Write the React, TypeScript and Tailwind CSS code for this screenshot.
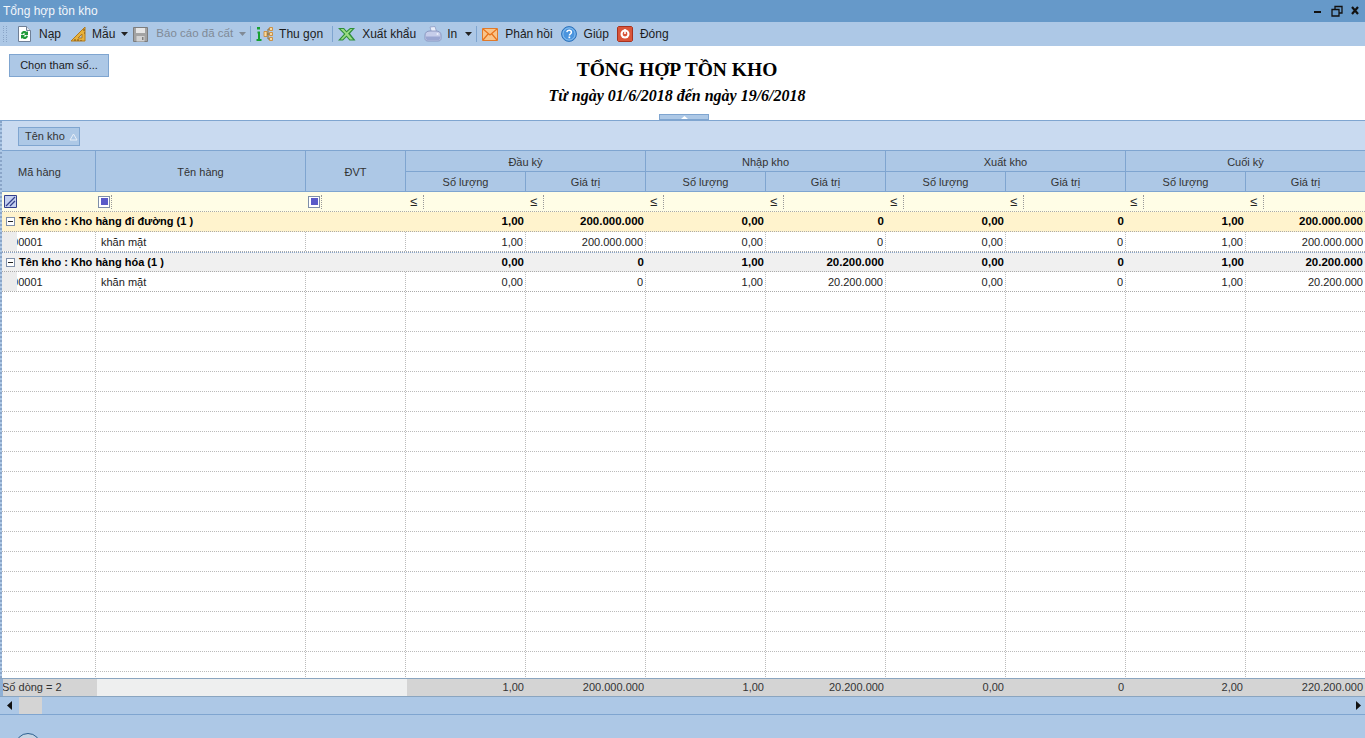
import type { ReactNode } from 'react';

const gridCols = 'grid grid-cols-[94px_210px_100px_repeat(8,120px)]';

function Caret({ color = '#222' }: { color?: string }) {
  return (
    <svg width="7" height="4" viewBox="0 0 7 4" className="shrink-0">
      <path d="M0 0h7L3.5 4z" fill={color} />
    </svg>
  );
}

function IconReload() {
  return (
    <svg width="15" height="16" viewBox="0 0 15 16">
      <path d="M1.5.5h8l4 4v11h-12z" fill="#fff" stroke="#6f7f96" />
      <path d="M9.5.5v4h4" fill="#dfe6ef" stroke="#6f7f96" />
      <path d="M4 8a3.5 3.5 0 0 1 6-2l1-1v4H7l1.300-1.300A1.800 1.800 0 0 0 5.600 8.500z" fill="#1f9a3a" />
      <path d="M11 10a3.500 3.500 0 0 1-6 2l-1 1V9h4l-1.300 1.300a1.800 1.800 0 0 0 2.700-.8z" fill="#1f9a3a" />
    </svg>
  );
}

function IconRuler() {
  return (
    <svg width="16" height="16" viewBox="0 0 16 16">
      <path d="M15 1v14H1z" fill="#e8b23c" stroke="#b27a1c" />
      <path d="M12 8v4H8z" fill="#adc8e6" stroke="#b27a1c" />
      <path d="M5 15v-2M8 15v-2M11 15v-1M15 4h-2M15 7h-1" stroke="#7a4f10" />
    </svg>
  );
}

function IconSave() {
  return (
    <svg width="15" height="15" viewBox="0 0 15 15">
      <path d="M.5.500h14v14H.500z" fill="#a3a3a3" stroke="#7d7d7d" />
      <path d="M3 1h9v5H3z" fill="#e6e6e6" />
      <path d="M3.500 9h8v5.500h-8z" fill="#d2d2d2" />
      <path d="M9 10h1.500v3H9z" fill="#808080" />
    </svg>
  );
}

function IconTree() {
  return (
    <svg width="17" height="16" viewBox="0 0 17 16">
      <path d="M1 1h3v2.500H1zM1.500 5.500h2.500V13h1.500v2H.500v-2h1.500V7.500h-.5z" fill="#18a032" />
      <path d="M8 5.500h3v5H8zM13.500 1.500h3v3h-3zM13.500 6.500h3v3h-3zM13.500 11.500h3v3h-3z" fill="#f7d9a0" stroke="#c9822a" strokeWidth=".8" />
      <path d="M11 8h2.500M12 3v10h1.500M12 3h1.500" fill="none" stroke="#8a6a30" />
    </svg>
  );
}

function IconExcel() {
  return (
    <svg width="18" height="14" viewBox="0 0 18 14">
      <path d="M0 1h6l2.500 3L12 1h5l-5 5.500 5.500 7h-6L8.500 10 5 13.500H0L6 7z" fill="#2f8f3a" />
      <path d="M2.500 2h3l3 3.500L12.500 2h2L10 6.500l5 6h-3L8.500 8.500 4.500 12.500h-2L7.500 7z" fill="#9bdc84" />
    </svg>
  );
}

function IconPrinter() {
  return (
    <svg width="18" height="16" viewBox="0 0 18 16">
      <path d="M6 1l5-.5 1.500 5-5 1z" fill="#e9eefa" stroke="#8f9cc4" strokeWidth=".8" />
      <path d="M1 9c0-2.500 2-4 5-4h6c3 0 5 1.500 5 4v3.500c0 1.500-1 2.500-3 2.500H4c-2 0-3-1-3-2.500z" fill="#c6cdea" stroke="#7f8cb8" strokeWidth=".8" />
      <path d="M2 10.500h14v2c0 1-1 1.800-2.500 1.800h-9C3 14.300 2 13.500 2 12.500z" fill="#9aa6d2" />
      <circle cx="13.500" cy="8" r="1" fill="#eef1fb" />
    </svg>
  );
}

function IconMail() {
  return (
    <svg width="16" height="13" viewBox="0 0 16 13">
      <path d="M.500.500h15v12H.500z" fill="#f9c489" stroke="#e07a2a" />
      <path d="M1 1l7 6 7-6M1 12l5.500-6.500M15 12L9.500 5.500" fill="none" stroke="#e8731c" strokeWidth="1.200" />
    </svg>
  );
}

function IconHelp() {
  return (
    <svg width="16" height="16" viewBox="0 0 16 16">
      <circle cx="8" cy="8" r="7.400" fill="#5aa3e6" stroke="#2b6fb8" />
      <circle cx="8" cy="8" r="6" fill="#4a94de" stroke="#a9d2f5" strokeWidth=".6" />
      <path d="M5.800 6.200C6 4.800 7 4.300 8.100 4.300c1.300 0 2.300.8 2.300 2 0 1.700-2 1.700-2 3.200" fill="none" stroke="#fff" strokeWidth="1.500" />
      <path d="M7.500 10.500h1.700v1.700H7.500z" fill="#fff" />
    </svg>
  );
}

function IconClose() {
  return (
    <svg width="16" height="16" viewBox="0 0 16 16">
      <path d="M1.500.500h13l1 1v13l-1 1h-13l-1-1v-13z" fill="#d9553a" stroke="#a8321f" />
      <circle cx="8" cy="8" r="4.500" fill="#fff" />
      <circle cx="8" cy="8" r="2.400" fill="#d9553a" />
      <path d="M7.200 3h1.600v5H7.200z" fill="#fff" />
    </svg>
  );
}

function Gripper() {
  return (
    <div className="ml-[3px] grid h-[16px] w-[6px] grid-cols-2 content-between">
      {Array.from({ length: 16 }).map((_, i) => (
        <span key={i} className="h-px w-px bg-[#8aa5c8]" />
      ))}
    </div>
  );
}

function Sep({ className }: { className: string }) {
  return <span className={`h-[16px] w-px bg-[#7fa5d0] ${className}`} />;
}

function ToolItem({ icon, label, className, gap, disabled }: { icon: ReactNode; label: string; className: string; gap: string; disabled?: boolean }) {
  return (
    <div className={`flex items-center ${className}`}>
      {icon}
      <span className={`${gap} ${disabled ? 'text-[11.5px] text-[#808a96]' : 'text-[#1c1c1c]'}`}>{label}</span>
    </div>
  );
}

function Toolbar() {
  return (
    <div className="flex h-[24px] shrink-0 items-center bg-[#adc8e6]">
      <Gripper />
      <ToolItem className="ml-[8px]" gap="ml-[7px]" icon={<IconReload />} label="Nạp" />
      <ToolItem className="ml-[9px]" gap="ml-[6px]" icon={<IconRuler />} label="Mẫu" />
      <span className="ml-[6px]"><Caret /></span>
      <ToolItem className="ml-[5px]" gap="ml-[8px]" icon={<IconSave />} label="Báo cáo đã cất" disabled />
      <span className="ml-[6px]"><Caret color="#808a96" /></span>
      <Sep className="ml-[4px]" />
      <ToolItem className="ml-[5px]" gap="ml-[6px]" icon={<IconTree />} label="Thu gọn" />
      <Sep className="ml-[9px]" />
      <ToolItem className="ml-[5px]" gap="ml-[6px]" icon={<IconExcel />} label="Xuất khẩu" />
      <ToolItem className="ml-[8px]" gap="ml-[5px]" icon={<IconPrinter />} label="In" />
      <span className="ml-[8px]"><Caret /></span>
      <Sep className="ml-[4px]" />
      <ToolItem className="ml-[5px]" gap="ml-[7px]" icon={<IconMail />} label="Phản hồi" />
      <ToolItem className="ml-[8px]" gap="ml-[7px]" icon={<IconHelp />} label="Giúp" />
      <ToolItem className="ml-[8px]" gap="ml-[7px]" icon={<IconClose />} label="Đóng" />
    </div>
  );
}

function TitleBar() {
  return (
    <div className="flex h-[22px] shrink-0 items-center bg-[#6699c9] pl-[3px] pr-[4px]">
      <span className="text-[12px] text-[#f2f6fb]">Tổng hợp tồn kho</span>
      <div className="ml-auto flex items-center">
        <svg width="50" height="14" viewBox="0 0 50 14">
          <path d="M3 7h7v2H3z" fill="#111" />
          <path d="M21 5.500h7v6.500h-7zM24 5V2.500h7V9h-3" fill="none" stroke="#111" strokeWidth="1.300" />
          <path d="M41 3l6 7M47 3l-6 7" stroke="#111" strokeWidth="2.200" />
        </svg>
      </div>
    </div>
  );
}

function ReportHeader() {
  return (
    <div className="grid h-[74px] shrink-0 grid-cols-[118px_1fr_129px] bg-white">
      <div className="pl-[9px] pt-[8px]">
        <button className="h-[23px] w-[100px] border border-[#7fa5d0] bg-[#adc8e6] text-[11px] text-[#1c1c1c]">Chọn tham số...</button>
      </div>
      <div className="pt-[12px] text-center font-[Liberation_Serif,serif] font-bold text-black">
        <div className="text-[19.5px] leading-[24px]">TỔNG HỢP TỒN KHO</div>
        <div className="mt-[4px] text-[16px] italic leading-[20px]">Từ ngày 01/6/2018 đến ngày 19/6/2018</div>
      </div>
      <div className="relative">
        <div className="absolute bottom-0 left-[-577px] flex h-[6px] w-[50px] items-center justify-center border border-[#7fa5d0] bg-[#adc8e6]">
          <svg width="7" height="3" viewBox="0 0 7 3">
            <path d="M3.500 0L7 3H0z" fill="#fff" />
          </svg>
        </div>
      </div>
    </div>
  );
}

function HeadCell({ children, className = '' }: { children: ReactNode; className?: string }) {
  return (
    <div className={`flex items-center border-r border-b border-[#7fa5d0] bg-[#adc8e6] pt-[2px] text-[11px] text-[#333] ${className}`}>
      {children}
    </div>
  );
}

function GridHeader() {
  const groups = ['Đầu kỳ', 'Nhập kho', 'Xuất kho', 'Cuối kỳ'];
  return (
    <div className={`${gridCols} grid-rows-[21px_20px]`}>
      <HeadCell className="row-span-2 pl-[16px]">Mã hàng</HeadCell>
      <HeadCell className="row-span-2 justify-center">Tên hàng</HeadCell>
      <HeadCell className="row-span-2 justify-center">ĐVT</HeadCell>
      {groups.map((g) => (
        <HeadCell key={g} className="col-span-2 justify-center">{g}</HeadCell>
      ))}
      {groups.flatMap((g) => [
        <HeadCell key={g + '1'} className="justify-center">Số lượng</HeadCell>,
        <HeadCell key={g + '2'} className="justify-center">Giá trị</HeadCell>,
      ])}
    </div>
  );
}

function CheckBox() {
  return (
    <div className="flex h-[14px] w-[15px] items-center justify-center border-r border-dotted border-[#999]">
      <span className="flex h-[12px] w-[12px] items-center justify-center border border-[#7f8fa8] bg-white">
        <span className="h-[7px] w-[7px] bg-[#5a5ac8]" />
      </span>
    </div>
  );
}

function FilterRow() {
  return (
    <div className={`${gridCols} h-[20px] border-b border-dotted border-[#aaa] bg-[#fffde6]`}>
      <div className="flex items-center pl-[2px]">
        <svg width="13" height="13" viewBox="0 0 13 13">
          <path d="M.500.500h12v12H.500z" fill="#c4d0f0" stroke="#34408c" />
          <path d="M2 11L11 2M6 11l5-5" stroke="#34408c" strokeWidth="1.300" />
        </svg>
      </div>
      <div className="flex items-center pl-[1px]"><CheckBox /></div>
      <div className="flex items-center pl-[1px]"><CheckBox /></div>
      {Array.from({ length: 8 }).map((_, i) => (
        <div key={i} className="flex items-center pl-[2px]">
          <span className="flex h-[14px] w-[16px] items-center border-r border-dotted border-[#999] pl-[2px] text-[13px] leading-none text-[#222]">≤</span>
        </div>
      ))}
    </div>
  );
}

function GroupRow({ label, values, bg, divider }: { label: string; values: string[]; bg: string; divider?: boolean }) {
  return (
    <div className={`${gridCols} h-[20px] shrink-0 border-b border-dotted border-[#aaa] ${bg} ${divider ? 'border-t border-t-[#8aa5c8]' : ''}`}>
      <div className="col-span-3 flex items-center pl-[4px]">
        <span className="flex h-[9px] w-[9px] items-center justify-center border border-[#7f8fa8] bg-white">
          <span className="h-px w-[5px] bg-[#222]" />
        </span>
        <span className="ml-[4px] text-[11px] font-bold text-black">{label}</span>
      </div>
      {values.map((v, i) => (
        <div key={i} className={`flex items-center justify-end pt-[1px] text-[11.5px] font-bold text-black ${i === 7 ? 'pr-[3px]' : 'pr-[2px]'}`}>{v}</div>
      ))}
    </div>
  );
}

function BodyCell({ children, right }: { children?: ReactNode; right?: boolean }) {
  return (
    <div className={`flex items-center overflow-hidden border-r border-dotted border-[#bbb] pt-[1px] ${right ? 'justify-end pr-[2px]' : 'pl-[5px]'}`}>
      {children}
    </div>
  );
}

function DataRow({ values }: { values: string[] }) {
  return (
    <div className={`${gridCols} h-[20px] shrink-0 border-b border-dotted border-[#aaa] bg-white text-[11px] text-[#222]`}>
      <div className="flex items-center overflow-hidden border-r border-dotted border-[#bbb]">
        <span className="relative z-10 h-full w-[15px] shrink-0 bg-[#ececec]" />
        <span className="-ml-[11px] pt-[1px]">000001</span>
      </div>
      <BodyCell>khăn mặt</BodyCell>
      <BodyCell />
      {values.map((v, i) => (
        <BodyCell key={i} right>{v}</BodyCell>
      ))}
    </div>
  );
}

function EmptyRow() {
  return (
    <div className={`${gridCols} h-[20px] shrink-0 border-b border-dotted border-[#bbb] bg-white`}>
      {Array.from({ length: 11 }).map((_, i) => (
        <div key={i} className="border-r border-dotted border-[#bbb]" />
      ))}
    </div>
  );
}

function Footer() {
  const totals = ['1,00', '200.000.000', '1,00', '20.200.000', '0,00', '0', '2,00', '220.200.000'];
  return (
    <div className="flex h-[19px] border-y border-[#8aa5c0] bg-[#d4d4d4] text-[11px] text-[#333]">
      <div className="flex w-[97px] shrink-0 items-center overflow-hidden border-l-[3px] border-[#8fb0d5]">
        <span className="-ml-[1px] whitespace-nowrap">Số dòng = 2</span>
      </div>
      <div className="w-[310px] shrink-0 bg-[#eeefef]" />
      {totals.map((t, i) => (
        <div key={i} className={`flex shrink-0 items-center justify-end ${i === 0 ? 'w-[119px]' : 'w-[120px]'} ${i >= 6 ? 'pr-[3px]' : 'pr-[2px]'}`}>{t}</div>
      ))}
    </div>
  );
}

function ScrollBar() {
  return (
    <div className="flex h-[18px] items-center border-b border-[#7fa5d0] bg-[#adc8e6]">
      <svg width="6" height="9" viewBox="0 0 6 9" className="ml-[7px]">
        <path d="M5 0v9L0 4.500z" fill="#111" />
      </svg>
      <div className="ml-[6px] h-full w-[23px] bg-[#d4d4d4]" />
      <svg width="6" height="9" viewBox="0 0 6 9" className="ml-auto mr-[3px]">
        <path d="M0 0v9l5-4.500z" fill="#111" />
      </svg>
    </div>
  );
}

export default function App() {
  const groupOne = ['1,00', '200.000.000', '0,00', '0', '0,00', '0', '1,00', '200.000.000'];
  const groupTwo = ['0,00', '0', '1,00', '20.200.000', '0,00', '0', '1,00', '20.200.000'];

  return (
    <div className="flex h-[738px] w-[1365px] flex-col overflow-hidden bg-[#adc8e6] font-[Liberation_Sans,sans-serif] text-[12px] leading-none">
      <TitleBar />
      <Toolbar />
      <ReportHeader />
      <div className="flex shrink-0 flex-col border-t border-[#7fa5d0]">
        <div className="border-l-2 border-dotted border-[#8aa5c8]">
          <div className="flex h-[30px] items-start border-b border-[#7fa5d0] bg-[#c9daf0] pl-[16px] pt-[6px]">
            <div className="flex h-[19px] w-[62px] items-center border border-[#7fa5d0] bg-[#adc8e6] pl-[6px] text-[11px] text-[#333]">
              Tên kho
              <svg width="9" height="8" viewBox="0 0 9 8" className="ml-[4px]">
                <path d="M4.500 1L8 7H1z" fill="none" stroke="#e8eef7" />
              </svg>
            </div>
          </div>
          <GridHeader />
          <FilterRow />
          <div className="flex h-[466px] flex-col overflow-hidden bg-white">
            <GroupRow label="Tên kho : Kho hàng đi đường (1 )" values={groupOne} bg="bg-[#fff3cd]" />
            <DataRow values={groupOne} />
            <GroupRow label="Tên kho : Kho hàng hóa (1 )" values={groupTwo} bg="bg-[#f0f0f0]" divider />
            <DataRow values={groupTwo} />
            {Array.from({ length: 20 }).map((_, i) => (
              <EmptyRow key={i} />
            ))}
          </div>
        </div>
        <Footer />
        <ScrollBar />
      </div>
      <div className="flex-1 overflow-hidden pl-[15px] pt-[18px]">
        <div className="h-[26px] w-[26px] rounded-full border border-[#2b5f8f] bg-[#c5d3e2]" />
      </div>
    </div>
  );
}
